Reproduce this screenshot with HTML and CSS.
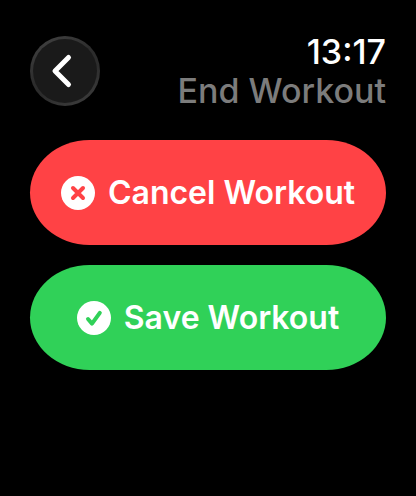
FILE: index.html
```html
<!DOCTYPE html>
<html lang="en">
<head>
<meta charset="UTF-8">
<meta name="viewport" content="width=device-width, initial-scale=1.0"/>
<title>End Workout</title>
<link rel="stylesheet" href="styles.css">
</head>
<body>
<header class="top-bar">
    <button class="back" aria-label="Back">
        <svg width="32" height="40" viewBox="0 0 32 40"><path d="M19.5 6.5 L6 20 L19.5 33.5"/></svg>
    </button>
    <div class="heading">
        <time>13:17</time>
        <h1>End Workout</h1>
    </div>
</header>
<main class="actions">
    <button class="action cancel">
        <svg class="icon" viewBox="0 0 34 34"><circle cx="17" cy="17" r="17"/><path d="M12 12 L22 22 M22 12 L12 22"/></svg>
        <span>Cancel Workout</span>
    </button>
    <button class="action save">
        <svg class="icon" viewBox="0 0 34 34"><circle cx="17" cy="17" r="17"/><path d="M11 18 L15 22.6 L22.8 11.8"/></svg>
        <span>Save Workout</span>
    </button>
</main>
</body>
</html>
```
FILE: styles.css
```css
* { margin:0; padding:0; box-sizing:border-box; }
body {
    font-family: Inter, sans-serif;
    background: #000;
    color: #fff;
    min-height: 100vh;
    padding: 32px 30px;
}
button {
    border: none;
    color: inherit;
    font-family: inherit;
    cursor: pointer;
}
.top-bar {
    display: flex;
    justify-content: space-between;
    align-items: center;
    margin-bottom: 30px;
}
.back {
    display: flex;
    justify-content: center;
    align-items: center;
    width: 70px; height: 70px;
    border-radius: 50%;
    border: 3px solid transparent;
    background:
        linear-gradient(#1a1a1a, #1a1a1a) padding-box,
        linear-gradient(150deg, #444, #2c2c2c 45%, #2c2c2c 60%, #404040) border-box;
}
.back path {
    fill: none;
    stroke: #fff;
    stroke-width: 5;
    stroke-linecap: round;
    stroke-linejoin: round;
}
.heading {
    text-align: right;
    font-size: 34px;
    line-height: 39px;
}
.heading time {
    display: block;
    font-weight: 500;
}
.heading h1 {
    color: #7c7c7c;
    font-size: 34px;
    font-weight: 500;
}
.actions {
    display: grid;
    gap: 20px;
}
.action {
    display: flex;
    justify-content: center;
    align-items: center;
    gap: 13px;
    height: 105px;
    border-radius: 60px / 53px;
    font-size: 32px;
    font-weight: 600;
}
.icon {
    width: 34px; height: 34px;
}
.icon circle { fill: #fff; }
.icon path {
    fill: none;
    stroke-width: 4;
    stroke-linecap: round;
    stroke-linejoin: round;
}
.cancel { background: #ff4245; }
.cancel path { stroke: #ff4245; }
.save { background: #30d158; }
.save path { stroke: #30d158; }
```
